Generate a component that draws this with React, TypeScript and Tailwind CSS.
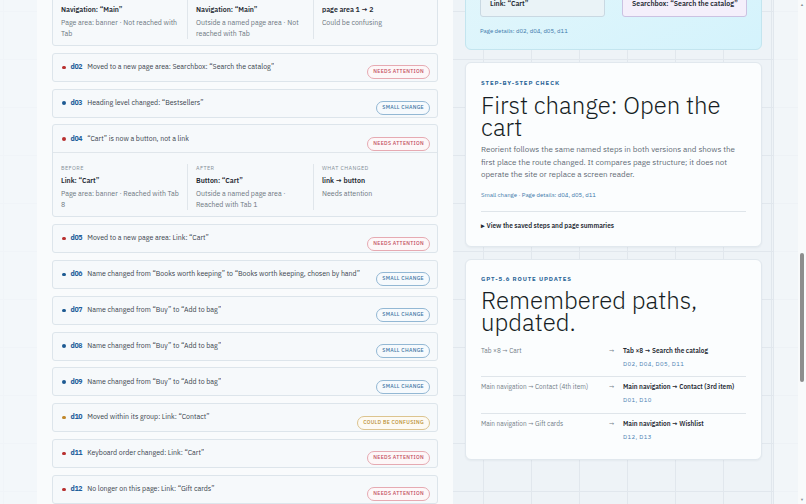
import React from 'react';

type Tone = 'attention' | 'small' | 'confusing';

type Detail = {
  before: { title: string; lines: string };
  after: { title: string; lines: string };
  changed: { title: string; lines: string };
};

type Change = {
  id: string;
  text: string;
  tone: Tone;
  detail?: Detail;
};

const changes: Change[] = [
  {
    id: 'd01',
    text: 'Moved to a new page area: Navigation: “Main”',
    tone: 'confusing',
    detail: {
      before: { title: 'Navigation: “Main”', lines: 'Page area: banner · Not reached with Tab' },
      after: { title: 'Navigation: “Main”', lines: 'Outside a named page area · Not reached with Tab' },
      changed: { title: 'page area 1 → 2', lines: 'Could be confusing' },
    },
  },
  { id: 'd02', text: 'Moved to a new page area: Searchbox: “Search the catalog”', tone: 'attention' },
  { id: 'd03', text: 'Heading level changed: “Bestsellers”', tone: 'small' },
  {
    id: 'd04',
    text: '“Cart” is now a button, not a link',
    tone: 'attention',
    detail: {
      before: { title: 'Link: “Cart”', lines: 'Page area: banner · Reached with Tab 8' },
      after: { title: 'Button: “Cart”', lines: 'Outside a named page area · Reached with Tab 1' },
      changed: { title: 'link → button', lines: 'Needs attention' },
    },
  },
  { id: 'd05', text: 'Moved to a new page area: Link: “Cart”', tone: 'attention' },
  { id: 'd06', text: 'Name changed from “Books worth keeping” to “Books worth keeping, chosen by hand”', tone: 'small' },
  { id: 'd07', text: 'Name changed from “Buy” to “Add to bag”', tone: 'small' },
  { id: 'd08', text: 'Name changed from “Buy” to “Add to bag”', tone: 'small' },
  { id: 'd09', text: 'Name changed from “Buy” to “Add to bag”', tone: 'small' },
  { id: 'd10', text: 'Moved within its group: Link: “Contact”', tone: 'confusing' },
  { id: 'd11', text: 'Keyboard order changed: Link: “Cart”', tone: 'attention' },
  { id: 'd12', text: 'No longer on this page: Link: “Gift cards”', tone: 'attention' },
];

const routes = [
  { from: 'Tab ×8 → Cart', to: 'Tab ×8 → Search the catalog', refs: 'D02, D04, D05, D11' },
  { from: 'Main navigation → Contact (4th item)', to: 'Main navigation → Contact (3rd item)', refs: 'D01, D10' },
  { from: 'Main navigation → Gift cards', to: 'Main navigation → Wishlist', refs: 'D12, D13' },
];

const Badge: React.FC<{ tone: Tone }> = ({ tone }) => {
  if (tone === 'attention') {
    return (
      <span className="inline-flex h-[14px] items-center rounded-full border border-[#e6aab2] bg-[#fdf7f8] px-[5px] text-[5.2px] font-medium uppercase tracking-[0.3px] text-[#c24a5c]">
        Needs attention
      </span>
    );
  }
  if (tone === 'confusing') {
    return (
      <span className="inline-flex h-[14px] items-center rounded-full border border-[#dcc48f] bg-[#fdfaf3] px-[5px] text-[5.2px] font-medium uppercase tracking-[0.3px] text-[#b88d2e]">
        Could be confusing
      </span>
    );
  }
  return (
    <span className="inline-flex h-[14px] items-center rounded-full border border-[#93b8d4] bg-[#f6fafd] px-[5px] text-[5.2px] font-medium uppercase tracking-[0.3px] text-[#3b73a2]">
      Small change
    </span>
  );
};

const Dot: React.FC<{ tone: Tone }> = ({ tone }) => (
  <span
    className={`h-[3.5px] w-[3.5px] shrink-0 rounded-full ${
      tone === 'attention' ? 'bg-[#b8302f]' : tone === 'confusing' ? 'bg-[#c0872b]' : 'bg-[#1d5a92]'
    }`}
  />
);

const DetailCol: React.FC<{ label: string; title: string; lines: string; first?: boolean }> = ({
  label,
  title,
  lines,
  first,
}) => (
  <div className={`pr-[8px] ${first ? '' : 'border-l border-[#e0e6eb] pl-[8px]'}`}>
    <div className="text-[5.5px] uppercase leading-[8px] tracking-[0.4px] text-[#858f98]">{label}</div>
    <div className="mt-[4px] text-[7px] font-semibold leading-[9px] text-[#1f2a33]">{title}</div>
    <div className="mt-[3px] text-[7px] leading-[11px] text-[#6c7780]">{lines}</div>
  </div>
);

const ChangeCard: React.FC<{ change: Change }> = ({ change }) => (
  <div className="shrink-0 rounded-[3px] border border-[#dde5eb] bg-[#f6f9fb]">
    <div className="flex h-[27px] items-center pl-[9px] pr-[7px]">
      <Dot tone={change.tone} />
      <span className="ml-[5px] text-[7px] font-bold tracking-[-0.3px] text-[#1f5f9c]">{change.id}</span>
      <span className="ml-[5px] truncate text-[7px] text-[#38424b]">{change.text}</span>
      <span className="ml-auto pl-2">
        <Badge tone={change.tone} />
      </span>
    </div>
    {change.detail && (
      <div className="grid grid-cols-[126px_126px_1fr] border-t border-[#e0e6eb] px-[8px] pb-[6px] pt-[11px]">
        <DetailCol first label="Before" title={change.detail.before.title} lines={change.detail.before.lines} />
        <DetailCol label="After" title={change.detail.after.title} lines={change.detail.after.lines} />
        <DetailCol label="What changed" title={change.detail.changed.title} lines={change.detail.changed.lines} />
      </div>
    )}
  </div>
);

export default function App() {
  return (
    <div className="flex h-[504px] w-[806px] overflow-hidden bg-[#eef3f7] bg-[image:linear-gradient(to_right,#e1e7ed_1px,transparent_1px),linear-gradient(to_bottom,#e1e7ed_1px,transparent_1px)] bg-[size:48px_48px] bg-[position:3px_11px] font-['IBM_Plex_Sans',Roboto,sans-serif]">
      <div className="flex min-w-0 flex-1 overflow-hidden">
        <div className="w-[37px] shrink-0 bg-[#f4f8fa]/80" />

        {/* change list */}
        <section className="w-[416px] shrink-0 bg-[#f9fbfc] px-[15px]">
          <div className="-mt-[47px] flex flex-col gap-[6.8px]">
            {changes.map((c) => (
              <ChangeCard key={c.id} change={c} />
            ))}
          </div>
        </section>

        {/* right rail */}
        <aside className="ml-[12px] flex w-[297px] shrink-0 flex-col gap-[12px]">
          <div className="-mt-[100px] flex h-[150px] flex-col justify-end rounded-[6px] border border-[#c3e5ef] bg-gradient-to-br from-[#e6f7fb] to-[#d4f3fc] px-[14px] pb-[14px]">
            <div className="grid grid-cols-2 gap-[17px]">
              <div className="rounded-[3px] border border-[#c9d8e2] bg-[#eaf3f7] px-[9px] pb-[8px] pt-[8px]">
                <div className="text-[5.5px] uppercase tracking-[0.4px] text-[#7d8891]">Before</div>
                <div className="mt-[4px] whitespace-nowrap text-[7px] font-semibold leading-[8px] text-[#1f2a33]">Link: “Cart”</div>
              </div>
              <div className="rounded-[3px] border border-[#cbc2e2] bg-[#f4effb] px-[9px] pb-[8px] pt-[8px]">
                <div className="text-[5.5px] uppercase tracking-[0.4px] text-[#7d8891]">After</div>
                <div className="mt-[4px] whitespace-nowrap text-[7px] font-semibold leading-[8px] text-[#1f2a33]">Searchbox: “Search the catalog”</div>
              </div>
            </div>
            <div className="mt-[10px] text-[6px] leading-[8px] text-[#3c78aa]">Page details: d02, d04, d05, d11</div>
          </div>

          <div className="rounded-[6px] border border-[#e1e8ee] bg-[#fbfdfe] px-[15px] pb-[16px] pt-[16px] shadow-[0_1px_2px_rgba(30,50,70,0.05)]">
            <div className="text-[6px] font-bold uppercase leading-[8px] tracking-[0.9px] text-[#2b6698]">Step-by-step check</div>
            <h2 className="mt-[7px] text-[24px] font-light leading-[22px] text-[#161d24]">First change: Open the cart</h2>
            <p className="mt-[5px] text-[8px] leading-[12.5px] text-[#5f6b75]">
              Reorient follows the same named steps in both versions and shows the first place the route changed. It
              compares page structure; it does not operate the site or replace a screen reader.
            </p>
            <div className="mt-[10px] text-[6px] leading-[8px] text-[#3c78aa]">Small change · Page details: d04, d05, d11</div>
            <div className="mt-[12px] border-t border-[#dfe5ea] pt-[10px] text-[6.5px] font-semibold leading-[8px] text-[#1f2a33]">
              ▸ View the saved steps and page summaries
            </div>
          </div>

          <div className="rounded-[6px] border border-[#e1e8ee] bg-[#fbfdfe] px-[15px] pb-[10px] pt-[15px] shadow-[0_1px_2px_rgba(30,50,70,0.05)]">
            <div className="text-[6px] font-bold uppercase leading-[8px] tracking-[0.9px] text-[#2b6698]">GPT-5.6 route updates</div>
            <h2 className="mt-[6px] text-[24px] font-light leading-[22px] text-[#161d24]">Remembered paths, updated.</h2>
            <div className="mt-[8px] flex flex-col">
              {routes.map((r, i) => (
                <div
                  key={r.from}
                  className={`grid grid-cols-[128px_14px_1fr] pb-[8.5px] pt-[6px] ${i > 0 ? 'border-t border-[#dfe5ea]' : ''}`}
                >
                  <div className="text-[6.5px] leading-[8px] text-[#737e88]">{r.from}</div>
                  <div className="text-[6.5px] leading-[8px] text-[#737e88]">→</div>
                  <div>
                    <div className="text-[6.5px] font-semibold leading-[8px] text-[#1f2a33]">{r.to}</div>
                    <div className="mt-[5px] text-[6px] leading-[8px] tracking-[0.4px] text-[#4b82b3]">{r.refs}</div>
                  </div>
                </div>
              ))}
            </div>
          </div>
        </aside>

        <div className="w-[11px] shrink-0" />
        <div className="flex-1 border-l border-[#e1e7ed] bg-[#f4f7fa]/70" />
      </div>

      {/* scrollbar */}
      <div className="flex w-[8px] shrink-0 flex-col items-center bg-[#f8fafb]">
        <span className="mt-[2px] text-[4px] leading-[5px] text-[#8a8f94]">▲</span>
        <div className="mt-[246px] h-[129px] w-[4px] rounded-full bg-[#8d8d8d]" />
        <span className="mt-auto mb-[2px] text-[4px] leading-[5px] text-[#8a8f94]">▼</span>
      </div>
    </div>
  );
}
